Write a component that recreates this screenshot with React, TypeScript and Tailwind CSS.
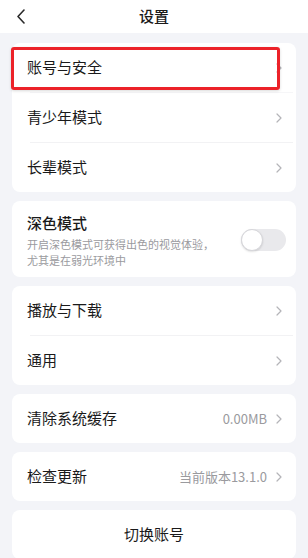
import React from "react";

const font = {
  fontFamily: '"Noto Sans CJK SC", "Noto Sans", "Liberation Sans", sans-serif',
};

function Chevron() {
  return (
    <svg width="6" height="10" viewBox="0 0 6 10" className="shrink-0">
      <path d="M1 1 L5 5 L1 9" fill="none" stroke="#b4b4b8" strokeWidth="1.2" strokeLinecap="round" strokeLinejoin="round" />
    </svg>
  );
}

function Row({ label, value, divider }: { label: string; value?: string; divider?: boolean }) {
  return (
    <div className="relative">
      <div className="flex h-[49px] items-center pl-[15px] pr-[14px]">
        <span className="flex-1 text-[15px] text-[#1a1a1a]">{label}</span>
        {value && <span className="mr-[9px] text-[13px] text-[#9a9a9e]">{value}</span>}
        <Chevron />
      </div>
      {divider && <div className="ml-[18px] mr-[3px] h-px bg-[#f2f2f4]" />}
    </div>
  );
}

function Card({ children, className = "" }: { children: React.ReactNode; className?: string }) {
  return <div className={`rounded-[8px] bg-white ${className}`}>{children}</div>;
}

export default function App() {
  return (
    <div className="h-[558px] w-[308px] overflow-hidden bg-[#f3f4f8]" style={font}>
      {/* top bar */}
      <div className="relative flex h-[33px] items-center justify-center bg-white">
        <svg width="10" height="15" viewBox="0 0 10 15" className="absolute left-[16px] top-[9px]">
          <path d="M8 1 L2 7.5 L8 14" fill="none" stroke="#2a2a2a" strokeWidth="1.6" strokeLinecap="round" strokeLinejoin="round" />
        </svg>
        <span className="text-[15px] font-medium text-[#1a1a1a]">设置</span>
      </div>

      <div className="flex flex-col gap-[9px] px-3 pt-[10px]">
        <Card className="relative">
          <div className="relative">
            <Row label="账号与安全" />
            <div className="absolute left-[-1px] top-[4px] h-[43px] w-[269px] rounded-[3px] border-[3px] border-[#ec2229] shadow-[0_1px_3px_rgba(0,0,0,0.15)]" />
          </div>
          <div className="ml-[18px] mr-[3px] h-px bg-[#f6f6f8]" />
          <Row label="青少年模式" divider />
          <Row label="长辈模式" />
        </Card>

        <Card className="flex items-center pb-[9px] pl-[15px] pr-[10px] pt-[11px]">
          <div className="flex-1">
            <div className="text-[15px] font-medium leading-[22px] text-[#1a1a1a]">深色模式</div>
            <div className="mt-[2px] text-[11px] leading-4 text-[#9a9a9e]">
              开启深色模式可获得出色的视觉体验，
              <br />
              尤其是在弱光环境中
            </div>
          </div>
          <div className="relative h-[22px] w-[45px] rounded-full bg-[#e9e9ec]">
            <div className="absolute left-0 top-0 h-[22px] w-[22px] rounded-full border border-[#d6d6da] bg-white shadow-[0_1px_2px_rgba(0,0,0,0.12)]" />
          </div>
        </Card>

        <Card>
          <Row label="播放与下载" divider />
          <Row label="通用" />
        </Card>

        <Card>
          <Row label="清除系统缓存" value="0.00MB" />
        </Card>

        <Card>
          <Row label="检查更新" value="当前版本13.1.0" />
        </Card>

        <Card className="flex h-[49px] items-center justify-center">
          <span className="text-[15px] text-[#1a1a1a]">切换账号</span>
        </Card>
      </div>
    </div>
  );
}
